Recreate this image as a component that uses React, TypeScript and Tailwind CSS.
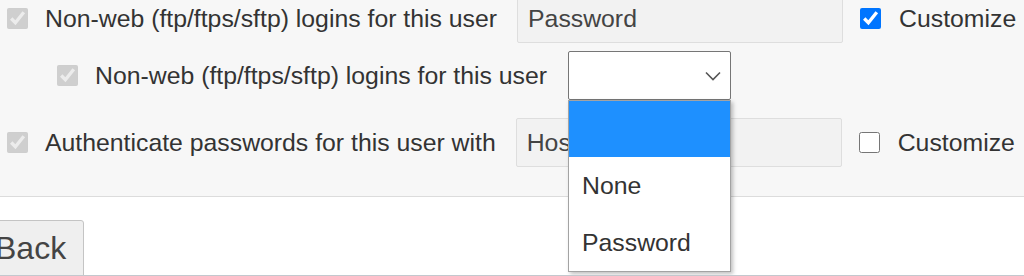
const Row = ({ indent, label, children }: { indent: string; label: string; children?: React.ReactNode }) => (
    <div className={`flex items-center h-[49px] ${indent}`}>
        <input type="checkbox" checked disabled readOnly className="w-[21px] h-[21px] shrink-0" />
        <span className="ml-[17px] whitespace-nowrap">{label}</span>
        {children}
    </div>
)

const Customize = ({ checked }: { checked: boolean }) => (
    <>
        <input type="checkbox" checked={checked} readOnly className="ml-[17px] w-[21px] h-[21px] shrink-0" />
        <span className="ml-[18px] whitespace-nowrap">Customize</span>
    </>
)

const App = () => {
    return (
        <div className="relative w-[1024px] h-[276px] overflow-hidden bg-white border-b border-[#c3c8ce] text-[24.8px] text-[#333] font-['Liberation_Sans',Arial,sans-serif]">
            <div className="flex flex-col bg-[#f7f7f7] border-b border-[#dcdcdc] h-[197px]">
                <div className="-mt-[6px]">
                    <Row indent="pl-[7px]" label="Non-web (ftp/ftps/sftp) logins for this user">
                        <div className="ml-[20px] w-[326px] h-[49px] shrink-0 flex items-center px-[10px] bg-[#f2f2f2] border border-[#dedede] rounded-[2px] text-[#444]">
                            Password
                        </div>
                        <Customize checked={true} />
                    </Row>
                </div>
                <div className="mt-[8px]">
                    <Row indent="pl-[57px]" label="Non-web (ftp/ftps/sftp) logins for this user">
                        <div className="ml-[21px] w-[163px] h-[49px] shrink-0 flex items-center justify-end pr-[9px] bg-white border border-[#767676] rounded-[2px]">
                            <svg width="16" height="10" viewBox="0 0 16 10" fill="none">
                                <path d="M1 1.5 L8 8.5 L15 1.5" stroke="#555" strokeWidth="1.6" />
                            </svg>
                        </div>
                    </Row>
                </div>
                <div className="mt-[18px]">
                    <Row indent="pl-[7px]" label="Authenticate passwords for this user with">
                        <div className="ml-[20px] w-[326px] h-[49px] shrink-0 flex items-center px-[10px] bg-[#f2f2f2] border border-[#dedede] rounded-[2px] text-[#444]">
                            Host
                        </div>
                        <Customize checked={false} />
                    </Row>
                </div>
            </div>

            <div className="pt-[23px]">
                <button className="-ml-[14px] h-[64px] pl-[8px] pr-[17px] pb-[8px] bg-[#efefef] border border-[#c4c4c4] rounded-[3px] text-[32px] text-[#444]">
                    Back
                </button>
            </div>

            <div className="absolute left-[568px] top-[100px] w-[163px] h-[172px] bg-white border border-[#a3a3a3] shadow-[2px_2px_4px_rgba(0,0,0,0.25)]">
                <div className="h-[56px] bg-[#1e90ff]"></div>
                <div className="h-[57px] flex items-center pl-[13px]">None</div>
                <div className="h-[57px] flex items-center pl-[13px]">Password</div>
            </div>
        </div>
    )
}

export default App
